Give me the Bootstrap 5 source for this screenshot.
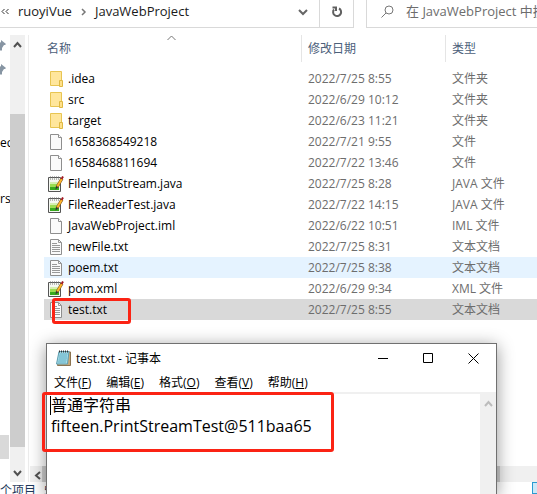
<!DOCTYPE html>
<html lang="zh-CN">
<head>
<meta charset="utf-8">
<meta name="viewport" content="width=device-width, initial-scale=1">
<title>JavaWebProject</title>
<link href="https://cdn.jsdelivr.net/npm/bootstrap@5.3.0/dist/css/bootstrap.min.css" rel="stylesheet">
<style>
body { font: 12px/21px "Open Sans", "Noto Sans CJK SC", sans-serif; color: #000; }
button { background: none; border: 0; padding: 0; color: inherit; }
svg { display: block; flex: none; }
.line { border: 0 solid #d9d9d9; }
.topbar { height: 28px; }
.address { border-bottom-width: 1px; }
.crumb { color: #1a1a1a; text-decoration: none; font-size: 13px; }
.crumb-sep { margin: 0 7px; }
.refresh { width: 35px; border-left-width: 1px; border-right-width: 1px; }
.search { width: 171px; margin-left: 12px; padding-left: 14px; border-left-width: 1px; border-bottom-width: 1px; }
.search input { border: 0; outline: 0; background: none; color: #6d6d6d; font-size: 13px; padding: 0; width: 200px; }
.search input::placeholder { color: #6d6d6d; opacity: 1; }
.body-row { padding-top: 7px; }
.tree { width: 10px; }
.tree-item { height: 24px; line-height: 24px; white-space: nowrap; }
.tree-first { margin-top: 48px; }
.tree-next { margin-top: 32px; }
.tree-on { width: 9px; background: #d9d9d9; margin-top: auto; margin-bottom: 23px; }
.vbar { width: 15px; background: #f0f0f0; }
.vthumb { background: #cdcdcd; margin: 61px 0 17px; }
.arrow { height: 18px; }
.pane { margin-left: 3px; border-left: 1px solid #ececec; min-width: 0; }
.files-area { padding-left: 15px; }
.files { width: 100%; table-layout: fixed; border-collapse: separate; border-spacing: 0; }
.files th { font-weight: 400; color: #4c607a; padding: 0 0 6px; position: relative; }
.files th div { height: 27px; line-height: 27px; padding-left: 6px; border-left: 1px solid #e5e5e5; }
.files th:first-child div { padding-left: 3px; border: 0; }
.files td { height: 21px; padding: 0 0 0 7px; color: #6d6d6d; white-space: nowrap; }
.files td:first-child { padding-left: 4px; color: #000; position: relative; }
.fname { gap: 4px; }
.files .hover td { background: #e5f3ff; }
.files .picked td { background: #d9d9d9; }
.c-name { width: 257px; }
.c-date { width: 144px; }
.sort { position: absolute; left: 123px; top: 0; }
.frame { border: 3px solid #fb2314; border-radius: 3px; pointer-events: none; }
.frame-file { left: 8px; top: -1px; width: 79px; height: 26px; }
.frame-text { left: -5px; top: 48px; width: 292px; height: 60px; }
.hbar { height: 16px; margin-left: 1px; background: #f0f0f0; }
.hthumb { background: #cdcdcd; margin-right: 37px; }
.status { height: 12px; line-height: 18px; color: #1e395b; }
.view-btn { width: 5px; height: 12px; border: 1px solid #2a9bd1; border-right: 0; background: #cce8f7; }
.notepad { left: 46px; right: 40px; top: 343px; bottom: 0; border: 1px solid #707070; border-bottom: 0; background: #fff; box-shadow: 0 3px 16px rgba(0,0,0,.42); }
.titlebar { height: 29px; padding-left: 8px; }
.win-btn { width: 45px; height: 29px; }
.menus { height: 21px; padding-left: 7px; gap: 15px; border-bottom: 2px solid #f0f0f0; line-height: 20px; }
.editor { resize: none; border: 0; outline: 0; padding: 1px 0 0 4px; font-size: 16px; line-height: 21px; color: #000; overflow: hidden; }
.caret { left: 3px; top: 52px; width: 1px; height: 19px; background: #000; }
.ebar { width: 16px; background: #f0f0f0; padding-top: 6px; }
</style>
<script src="https://cdn.jsdelivr.net/npm/bootstrap@5.3.0/dist/js/bootstrap.bundle.min.js"></script>
</head>
<body class="overflow-hidden bg-white">
<svg class="d-none" aria-hidden="true">
  <symbol id="folder" viewBox="0 0 16 16"><path d="M2.500.5h11v14h-11z" fill="#ffe69c" stroke="#e8c552"/><path d="M11.500 9.500h3v6h-3z" fill="#ffe08a" stroke="#dfb943"/></symbol>
  <symbol id="blank" viewBox="0 0 16 16"><path d="M2.500.5h8l3 3v12h-11z" fill="#fafafa" stroke="#8e8e8e"/><path d="M10.500.5v3h3" fill="#fff" stroke="#8e8e8e"/></symbol>
  <symbol id="text" viewBox="0 0 16 16"><path d="M2.500.5h8l3 3v12h-11z" fill="#fafafa" stroke="#8e8e8e"/><path d="M10.500.5v3h3M4 4.500h5M4 6.500h8M4 8.500h8M4 10.500h8M4 12.500h8" fill="none" stroke="#999"/></symbol>
  <symbol id="code" viewBox="0 0 16 16"><path d="M.5 1.500h12v14H.5z" fill="#f5f8f2" stroke="#555"/><path d="M2 6h9v2H2z" fill="#d5efb0"/><path d="M2 8h9v3H2z" fill="#9bdc52"/><path d="M2 11h9v3H2z" fill="#37a91e"/><path d="M2.500.5v3M4.500.5v3M6.500.5v3M8.500.5v3M10.500.5v3" stroke="#777" stroke-dasharray="1 1"/><path d="M14 2.500 9 11" stroke="#76501a" stroke-width="3"/><path d="M14 2.500 9 11" stroke="#ffb52b" stroke-width="2"/><path d="m13.500 3 1.500-2.500" stroke="#a01822" stroke-width="2"/><path d="m8 10-.5 3.500L10.500 11z" fill="#333"/></symbol>
  <symbol id="pin" viewBox="0 0 12 12"><path d="m7 0 5 4-1 1h-1L8 8v2L7 11 4.500 8.500 1 12l-.5-.5L3.500 7.500 1 5l1-1h2l3-2z" fill="#8795a3"/></symbol>
</svg>

<div class="d-flex flex-column vh-100">
  <header class="topbar d-flex flex-shrink-0">
    <nav class="address line d-flex flex-grow-1" aria-label="路径">
      <div class="d-flex align-items-center flex-grow-1 pb-1">
        <svg width="10" height="12" fill="none" stroke="#333"><path d="M4.500 3 2 5.500 4.500 8M8.500 3 6 5.500 8.500 8"/></svg>
        <a class="crumb ms-2" href="#">ruoyiVue</a>
        <svg class="crumb-sep" width="9" height="12" fill="none" stroke="#777" stroke-width="1.500"><path d="m3 3 3 3-3 3"/></svg>
        <a class="crumb" href="#">JavaWebProject</a>
        <button class="ms-auto me-2" aria-label="展开"><svg width="16" height="14" fill="none" stroke="#666" stroke-width="2"><path d="m4 5 4 4 4-4"/></svg></button>
      </div>
      <button class="refresh line d-flex align-items-center justify-content-center pb-1" aria-label="刷新"><svg width="14" height="14" fill="none" stroke="#606060" stroke-width="2"><path d="M9 3.500A4 4 0 1 1 4 4.500"/><path d="M2.500 2.500H6V6"/></svg></button>
    </nav>
    <label class="search line d-flex align-items-center pb-1 overflow-hidden">
      <svg width="13" height="14" fill="none" stroke="#777"><circle cx="8" cy="5" r="4"/><path d="M5 8 .5 12.500"/></svg>
      <input class="ms-2 ps-1" type="text" aria-label="搜索" placeholder="在 JavaWebProject 中搜索">
    </label>
  </header>

  <div class="body-row d-flex flex-grow-1">
    <aside class="tree d-flex flex-column flex-shrink-0 overflow-hidden">
      <div class="tree-item pt-1"><svg width="8" height="14"><use href="#pin" x="-6" y="1" width="12" height="12"/></svg></div>
      <div class="tree-item pt-1"><svg width="8" height="14"><use href="#pin" x="-6" y="1" width="12" height="12"/></svg></div>
      <div class="tree-item tree-first">ec</div>
      <div class="tree-item tree-next">rse</div>
      <div class="tree-item tree-on"></div>
    </aside>
    <div class="vbar d-flex flex-column flex-shrink-0">
      <button class="arrow d-flex justify-content-center align-items-center" aria-label="向上"><svg width="9" height="7" fill="none" stroke="#505050" stroke-width="2"><path d="m1 6 3.500-4L8 6"/></svg></button>
      <div class="vthumb flex-grow-1"></div>
      <button class="arrow d-flex justify-content-center align-items-center" aria-label="向下"><svg width="9" height="7" fill="none" stroke="#505050" stroke-width="2"><path d="m1 1 3.500 4L8 1"/></svg></button>
    </div>
    <main class="pane d-flex flex-column flex-grow-1">
      <div class="files-area flex-grow-1">
        <table class="files">
          <colgroup><col class="c-name"><col class="c-date"><col></colgroup>
          <thead><tr>
            <th scope="col"><div>名称</div><svg class="sort" width="9" height="6" fill="none" stroke="#777"><path d="m.5 5 4-4 4 4"/></svg></th>
            <th scope="col"><div>修改日期</div></th><th scope="col"><div>类型</div></th>
          </tr></thead>
          <tbody>
            <tr><td><div class="fname d-flex align-items-center"><svg width="16" height="16"><use href="#folder"/></svg>.idea</div></td><td>2022/7/25 8:55</td><td>文件夹</td></tr>
            <tr><td><div class="fname d-flex align-items-center"><svg width="16" height="16"><use href="#folder"/></svg>src</div></td><td>2022/6/29 10:12</td><td>文件夹</td></tr>
            <tr><td><div class="fname d-flex align-items-center"><svg width="16" height="16"><use href="#folder"/></svg>target</div></td><td>2022/6/23 11:21</td><td>文件夹</td></tr>
            <tr><td><div class="fname d-flex align-items-center"><svg width="16" height="16"><use href="#blank"/></svg>1658368549218</div></td><td>2022/7/21 9:55</td><td>文件</td></tr>
            <tr><td><div class="fname d-flex align-items-center"><svg width="16" height="16"><use href="#blank"/></svg>1658468811694</div></td><td>2022/7/22 13:46</td><td>文件</td></tr>
            <tr><td><div class="fname d-flex align-items-center"><svg width="16" height="16"><use href="#code"/></svg>FileInputStream.java</div></td><td>2022/7/25 8:28</td><td>JAVA 文件</td></tr>
            <tr><td><div class="fname d-flex align-items-center"><svg width="16" height="16"><use href="#code"/></svg>FileReaderTest.java</div></td><td>2022/7/22 14:15</td><td>JAVA 文件</td></tr>
            <tr><td><div class="fname d-flex align-items-center"><svg width="16" height="16"><use href="#blank"/></svg>JavaWebProject.iml</div></td><td>2022/6/22 10:51</td><td>IML 文件</td></tr>
            <tr><td><div class="fname d-flex align-items-center"><svg width="16" height="16"><use href="#text"/></svg>newFile.txt</div></td><td>2022/7/25 8:31</td><td>文本文档</td></tr>
            <tr class="hover"><td><div class="fname d-flex align-items-center"><svg width="16" height="16"><use href="#text"/></svg>poem.txt</div></td><td>2022/7/25 8:38</td><td>文本文档</td></tr>
            <tr><td><div class="fname d-flex align-items-center"><svg width="16" height="16"><use href="#code"/></svg>pom.xml</div></td><td>2022/6/29 9:34</td><td>XML 文件</td></tr>
            <tr class="picked"><td><div class="fname d-flex align-items-center"><svg width="16" height="16"><use href="#text"/></svg>test.txt</div><div class="frame frame-file position-absolute"></div></td><td>2022/7/25 8:55</td><td>文本文档</td></tr>
          </tbody>
        </table>
      </div>
      <div class="hbar d-flex">
        <button class="arrow d-flex align-items-center ps-1" aria-label="向左"><svg width="8" height="9" fill="none" stroke="#505050" stroke-width="2"><path d="M6 1 2 4.500 6 8"/></svg></button>
        <div class="hthumb flex-grow-1"></div>
      </div>
    </main>
  </div>

  <footer class="status d-flex justify-content-between flex-shrink-0 overflow-hidden">
    <div class="d-flex text-nowrap"><span>个项目</span><span class="ms-2">5</span></div>
    <button class="view-btn" aria-label="详细信息"></button>
  </footer>
</div>

<section class="notepad position-absolute d-flex flex-column" aria-label="记事本">
  <div class="titlebar d-flex align-items-center">
    <svg width="17" height="17"><path d="M4.500 2h11v13.500h-13z" fill="#c8a878" stroke="#8b7350"/><path d="M4 1.500h10L12.500 14H1.500z" fill="#a5dbe8" stroke="#5e9eb0"/><path d="M4.500 4h8M4 6h8M4 8h8M3.500 10h8M3 12h8" stroke="#65b1c5"/><path d="M4 1.500h10" stroke="#333" stroke-width="2" stroke-dasharray="1 1"/></svg>
    <span class="ms-1">test.txt - 记事本</span>
    <div class="d-flex ms-auto">
      <button class="win-btn d-flex align-items-center justify-content-center" aria-label="最小化"><svg width="11" height="11" stroke="#000"><path d="M0 5.500h10"/></svg></button>
      <button class="win-btn d-flex align-items-center justify-content-center" aria-label="最大化"><svg width="11" height="11" fill="none" stroke="#000"><path d="M.5.5h9v9h-9z"/></svg></button>
      <button class="win-btn d-flex align-items-center justify-content-center" aria-label="关闭"><svg width="11" height="11" stroke="#000"><path d="m.5.5 10 10m0-10-10 10"/></svg></button>
    </div>
  </div>
  <div class="menus d-flex">
    <button>文件(<u>F</u>)</button><button>编辑(<u>E</u>)</button><button>格式(<u>O</u>)</button><button>查看(<u>V</u>)</button><button>帮助(<u>H</u>)</button>
  </div>
  <div class="d-flex flex-grow-1">
    <textarea class="editor flex-grow-1" aria-label="文本" spellcheck="false">普通字符串
fifteen.PrintStreamTest@511baa65</textarea>
    <div class="ebar d-flex justify-content-center"><svg width="9" height="7" fill="none" stroke="#bcbcbc" stroke-width="2"><path d="m1 6 3.500-4L8 6"/></svg></div>
  </div>
  <div class="caret position-absolute"></div>
  <div class="frame frame-text position-absolute"></div>
</section>
</body>
</html>
